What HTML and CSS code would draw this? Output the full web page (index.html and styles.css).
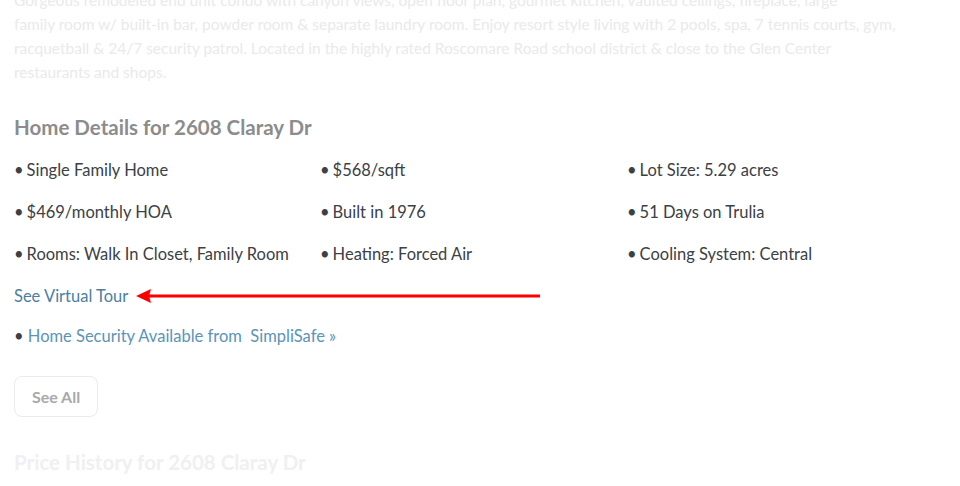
FILE: index.html
```html
<!DOCTYPE html>
<html lang="en">
<head>
  <meta charset="UTF-8">
  <meta name="viewport" content="width=device-width, initial-scale=1.0">
  <title>2608 Claray Dr</title>
  <link rel="stylesheet" href="styles.css">
</head>
<body>
  <div class="page">
    <p class="description faded">
      Gorgeous remodeled end unit condo with canyon views, open floor plan, gourmet kitchen, vaulted ceilings, fireplace, large<br>
      family room w/ built-in bar, powder room &amp; separate laundry room. Enjoy resort style living with 2 pools, spa, 7 tennis courts, gym,<br>
      racquetball &amp; 24/7 security patrol. Located in the highly rated Roscomare Road school district &amp; close to the Glen Center<br>
      restaurants and shops.
    </p>

    <section class="details">
      <h2 class="section-title">Home Details for 2608 Claray Dr</h2>
      <ul class="detail-grid">
        <li>Single Family Home</li>
        <li>$568/sqft</li>
        <li>Lot Size: 5.29 acres</li>
        <li>$469/monthly HOA</li>
        <li>Built in 1976</li>
        <li>51 Days on Trulia</li>
        <li>Rooms: Walk In Closet, Family Room</li>
        <li>Heating: Forced Air</li>
        <li>Cooling System: Central</li>
      </ul>

      <div class="tour-row">
        <a href="#" class="tour-link">See Virtual Tour</a>
        <!-- стрелка-указатель -->
        <svg class="arrow" width="404" height="16" viewBox="0 0 404 16" aria-hidden="true">
          <polygon points="0,8 15,1 13,8 15,15" fill="#ff0000"/>
          <rect x="12" y="6.5" width="392" height="3" fill="#ff0000"/>
        </svg>
      </div>

      <p class="security">&bull; <a href="#">Home Security Available from&nbsp; SimpliSafe &raquo;</a></p>

      <button class="see-all">See All</button>
    </section>

    <h2 class="section-title faded-title">Price History for 2608 Claray Dr</h2>
  </div>
</body>
</html>
```

FILE: styles.css
```css
body {
  margin: 0;
  background: #fff;
  font-family: Lato, "Open Sans", Arial, sans-serif;
  color: #3b4144;
}
.page {
  padding: 0 14px;
  margin-top: -12px;
}
.description {
  margin: 0;
  font-size: 15.5px;
  line-height: 24px;
}
.faded {
  color: #e9eaea;
}
.details {
  padding-top: 29px;
}
.section-title {
  margin: 0;
  font-size: 20.5px;
  font-weight: 700;
  color: #8c8c8c;
  line-height: 28px;
}
.detail-grid {
  list-style: none;
  margin: 18px 0 0;
  padding: 0;
  display: grid;
  grid-template-columns: 306px 307px 1fr;
  row-gap: 20px;
  font-size: 16.5px;
  line-height: 22px;
}
.detail-grid li::before {
  content: "\2022";
  margin-right: 3px;
}
.tour-row {
  display: flex;
  align-items: center;
  gap: 8px;
  margin-top: 20px;
  height: 22px;
}
.tour-link,
.security a {
  color: #4c7f9f;
  text-decoration: none;
  font-size: 16.5px;
}
.security {
  margin: 18px 0 0;
  font-size: 16.5px;
  line-height: 22px;
}
.security a {
  color: #5a94b7;
}
.arrow {
  display: block;
}
.see-all {
  margin-top: 29px;
  width: 84px;
  height: 41px;
  border: 1px solid #e9ebec;
  border-radius: 8px;
  background: #fff;
  color: #a9a9a9;
  font-family: inherit;
  font-size: 16px;
  font-weight: 700;
  cursor: pointer;
}
.faded-title {
  margin-top: 31px;
  color: #eef0f1;
}
```
